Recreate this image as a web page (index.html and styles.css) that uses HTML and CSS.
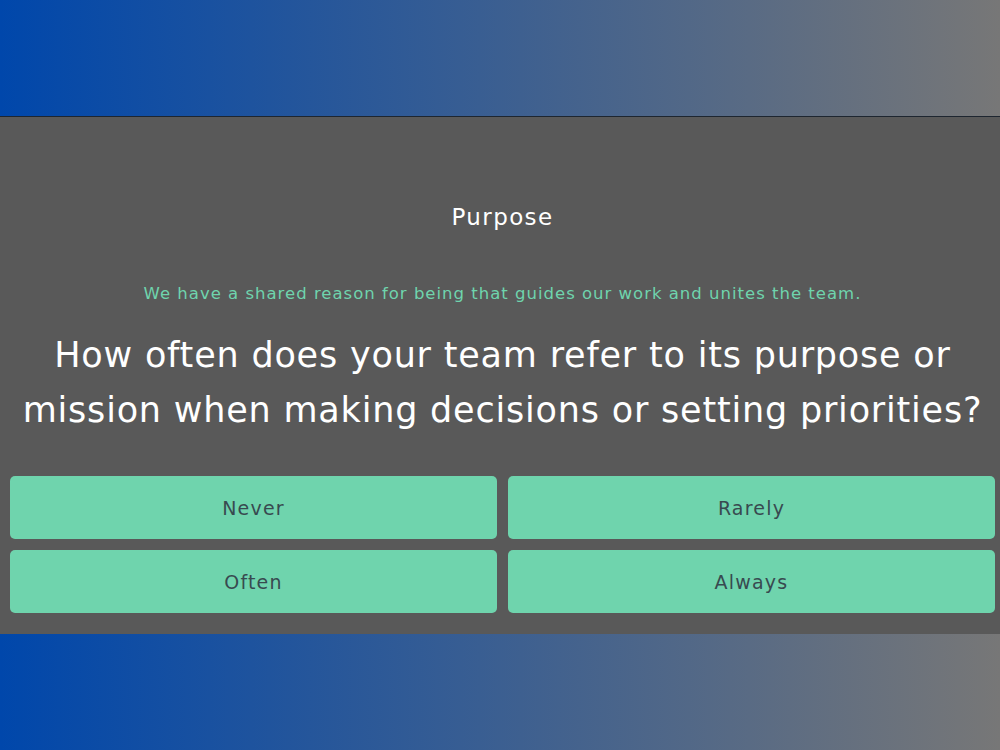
FILE: index.html
```html
<!DOCTYPE html>
<html>
    <head>
        <title>Team Survey</title>
        <meta charset="UTF-8">
        <link rel="stylesheet" href="styles.css">
    </head>
    <body>
        <div class="quiz">
            <h2 class="topic">Purpose</h2>
            <p class="blurb">We have a shared reason for being that guides our work and unites the team.</p>
            <h1 class="question">How often does your team refer to its purpose or mission when making decisions or setting priorities?</h1>
            <div class="answers">
                <button class="answer">Never</button>
                <button class="answer">Rarely</button>
                <button class="answer">Often</button>
                <button class="answer">Always</button>
            </div>
        </div>
    </body>
</html>
```

FILE: styles.css
```css
body { margin: 0; height: 750px; display: flex; flex-direction: column; justify-content: center;
       background: linear-gradient(to right, #0047ab, #777777);
       font-family: 'DejaVu Sans', 'Open Sans', sans-serif; }

.quiz { background-color: #595959; border-top: 1px solid #1e2630; padding: 85px 5px 21px 10px; text-align: center; }

.topic { margin: 0; color: #ffffff; font-size: 23px; font-weight: 400; line-height: 30px; letter-spacing: 1.4px; }
.blurb { margin: 51px 0 0 0; color: #6fd4ad; font-size: 16.5px; line-height: 22px; letter-spacing: 1px; }
.question { margin: 23px 0 0 0; color: #ffffff; font-size: 35px; font-weight: 400; line-height: 55px; letter-spacing: 0.8px; }

.answers { display: grid; grid-template-columns: 1fr 1fr; gap: 11px; margin-top: 38px; }
.answer { height: 63px; border: none; border-radius: 5px; background-color: #6fd4ad; color: #384a50;
          font-family: inherit; font-size: 19px; letter-spacing: 1.2px; }
```
